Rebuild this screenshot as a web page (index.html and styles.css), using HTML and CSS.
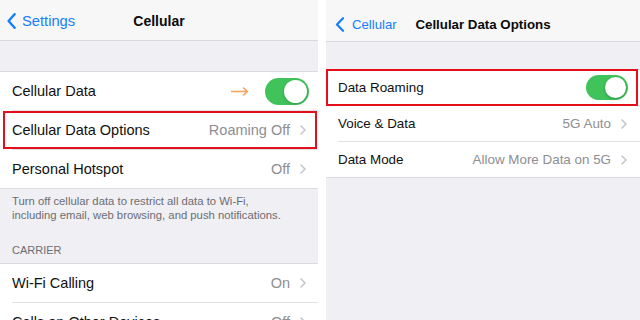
FILE: index.html
```html
<!DOCTYPE html>
<html>
<head>
<meta charset="utf-8">
<link rel="stylesheet" href="styles.css">
</head>
<body>
<div class="screen">
  <section class="panel panel-left">
    <header class="nav nav-left">
      <div class="back">
        <svg class="back-icon" width="9" height="16" viewBox="0 0 9 16"><path d="M7.6 1.2 L1.6 8 L7.6 14.8" fill="none" stroke="#147efb" stroke-width="2.4" stroke-linecap="round" stroke-linejoin="round"/></svg>
        <span>Settings</span>
      </div>
      <div class="title">Cellular</div>
      <div></div>
    </header>
    <div class="spacer-l"></div>
    <div class="group">
      <div class="row row-l">
        <span class="label">Cellular Data</span>
        <svg class="arrow" width="18" height="9" viewBox="0 0 18 9"><path d="M0 4.5 H16.5 M12.5 1 L16.5 4.5 L12.5 8" fill="none" stroke="#f3a35e" stroke-width="1.6" stroke-linejoin="round" stroke-linecap="round"/></svg>
        <span class="toggle toggle-l"></span>
      </div>
      <div class="row row-l highlight-l">
        <span class="label">Cellular Data Options</span>
        <span class="value">Roaming Off</span>
        <svg class="chev" width="6" height="10" viewBox="0 0 6 10"><path d="M1 1 L5 5 L1 9" fill="none" stroke="#c4c4c8" stroke-width="1.5" stroke-linecap="round" stroke-linejoin="round"/></svg>
      </div>
      <div class="row row-l">
        <span class="label">Personal Hotspot</span>
        <span class="value">Off</span>
        <svg class="chev" width="6" height="10" viewBox="0 0 6 10"><path d="M1 1 L5 5 L1 9" fill="none" stroke="#c4c4c8" stroke-width="1.5" stroke-linecap="round" stroke-linejoin="round"/></svg>
      </div>
    </div>
    <p class="footer">Turn off cellular data to restrict all data to Wi-Fi,<br>including email, web browsing, and push notifications.</p>
    <div class="section-head">CARRIER</div>
    <div class="group">
      <div class="row row-l">
        <span class="label">Wi-Fi Calling</span>
        <span class="value">On</span>
        <svg class="chev" width="6" height="10" viewBox="0 0 6 10"><path d="M1 1 L5 5 L1 9" fill="none" stroke="#c4c4c8" stroke-width="1.5" stroke-linecap="round" stroke-linejoin="round"/></svg>
      </div>
      <div class="row row-l">
        <span class="label">Calls on Other Devices</span>
        <span class="value">Off</span>
        <svg class="chev" width="6" height="10" viewBox="0 0 6 10"><path d="M1 1 L5 5 L1 9" fill="none" stroke="#c4c4c8" stroke-width="1.5" stroke-linecap="round" stroke-linejoin="round"/></svg>
      </div>
    </div>
  </section>

  <section class="panel panel-right">
    <header class="nav nav-right">
      <div class="back back-r">
        <svg class="back-icon" width="10" height="15" viewBox="0 0 10 15"><path d="M8 1.2 L2 7.5 L8 13.8" fill="none" stroke="#147efb" stroke-width="2.2" stroke-linecap="round" stroke-linejoin="round"/></svg>
        <span>Cellular</span>
      </div>
      <div class="title title-r">Cellular Data Options</div>
      <div></div>
    </header>
    <div class="spacer-r"></div>
    <div class="group">
      <div class="row row-r highlight-r">
        <span class="label">Data Roaming</span>
        <span class="toggle toggle-r"></span>
      </div>
      <div class="row row-r">
        <span class="label">Voice &amp; Data</span>
        <span class="value">5G Auto</span>
        <svg class="chev" width="6" height="10" viewBox="0 0 6 10"><path d="M1 1 L5 5 L1 9" fill="none" stroke="#c4c4c8" stroke-width="1.5" stroke-linecap="round" stroke-linejoin="round"/></svg>
      </div>
      <div class="row row-r">
        <span class="label">Data Mode</span>
        <span class="value">Allow More Data on 5G</span>
        <svg class="chev" width="6" height="10" viewBox="0 0 6 10"><path d="M1 1 L5 5 L1 9" fill="none" stroke="#c4c4c8" stroke-width="1.5" stroke-linecap="round" stroke-linejoin="round"/></svg>
      </div>
    </div>
  </section>
</div>
</body>
</html>
```
FILE: styles.css
```css
* { box-sizing: border-box; }
html, body { margin: 0; padding: 0; }
body {
  width: 640px;
  height: 320px;
  overflow: hidden;
  background: #ffffff;
  font-family: "Liberation Sans", Arial, sans-serif;
  color: #111111;
}
.screen {
  display: flex;
  gap: 8px;
  height: 320px;
}
.panel {
  background: #efeff4;
  height: 320px;
  overflow: hidden;
  display: flex;
  flex-direction: column;
}
.panel-left { width: 318px; }
.panel-right { width: 314px; }

.nav {
  display: grid;
  grid-template-columns: 1fr auto 1fr;
  align-items: center;
  background: #f7f7f8;
  border-bottom: 1px solid #d9d9dd;
  flex: none;
}
.nav-left { height: 41px; padding-top: 2px; }
.nav-right { height: 42px; padding-top: 7px; }
.back {
  display: flex;
  align-items: center;
  color: #147efb;
  font-size: 14.7px;
  padding-left: 7px;
  gap: 6px;
}
.back-r { padding-left: 9px; font-size: 13.2px; gap: 7px; }
.back-icon { display: block; }
.title {
  font-weight: bold;
  font-size: 14px;
  color: #0a0a0a;
}
.title-r { font-size: 13.3px; }

.spacer-l { height: 30px; flex: none; }
.spacer-r { height: 27px; flex: none; }

.group {
  background: #ffffff;
  border-top: 1px solid #dcdce0;
  border-bottom: 1px solid #dcdce0;
  flex: none;
}
.row {
  position: relative;
  display: flex;
  align-items: center;
  margin-left: 12px;
  border-bottom: 1px solid #e2e2e6;
}
.row:last-child { border-bottom: none; }
.row-l { height: 39px; font-size: 14.5px; padding-right: 12px; }
.row-l:last-child { height: 38px; }
.row-r { height: 36px; font-size: 13.4px; padding-right: 13px; }
.row-r:last-child { height: 35px; }
.label { flex: 1; white-space: nowrap; }
.value { color: #8e8e93; margin-right: 10px; white-space: nowrap; }
.chev { display: block; }
.arrow { display: block; margin-right: 16px; }

.toggle {
  position: relative;
  display: block;
  background: #41c35b;
  border-radius: 14px;
}
.toggle::after {
  content: "";
  position: absolute;
  top: 2px;
  right: 2px;
  border-radius: 50%;
  background: #ffffff;
  box-shadow: 0 1px 3px rgba(0,0,0,0.25);
}
.toggle-l { width: 44px; height: 27px; margin-right: -3px; }
.toggle-l::after { width: 23px; height: 23px; }
.toggle-r { width: 42px; height: 25px; margin-right: -1px; }
.toggle-r::after { width: 21px; height: 21px; }

.highlight-l::after,
.highlight-r::after {
  content: "";
  position: absolute;
  border: 2px solid #e3101b;
  pointer-events: none;
}
.highlight-l::after { left: -9px; right: 1px; top: 0; bottom: 0; }
.highlight-r::after { left: -12px; right: 2px; top: -1px; bottom: -1px; }

.footer {
  margin: 0;
  padding: 5px 12px 0;
  font-size: 11.3px;
  line-height: 14px;
  color: #6d6d72;
  flex: none;
}
.section-head {
  margin-top: 21px;
  padding-left: 12px;
  font-size: 11px;
  line-height: 14px;
  height: 20px;
  color: #6d6d72;
  flex: none;
}
```
